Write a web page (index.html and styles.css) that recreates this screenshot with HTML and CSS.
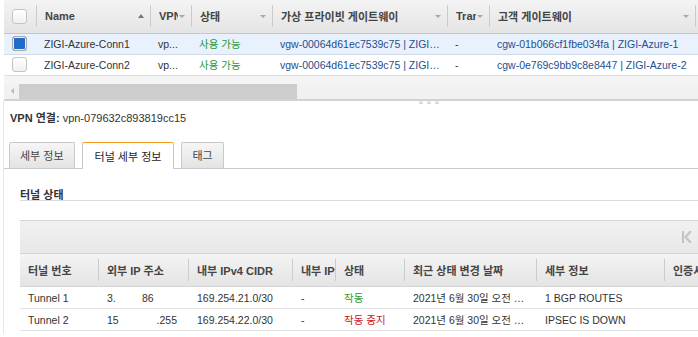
FILE: index.html
```html
<!DOCTYPE html>
<html lang="ko">
<head>
  <meta charset="UTF-8">
  <title>VPN 연결</title>
  <link rel="stylesheet" href="styles.css">
</head>
<body>

  <div class="list-panel">
    <table class="grid top-grid">
      <colgroup>
        <col style="width:32px"><col style="width:114px"><col style="width:41px"><col style="width:81px">
        <col style="width:175px"><col style="width:42px"><col style="width:206px"><col style="width:60px">
      </colgroup>
      <thead>
        <tr>
          <th class="cb-cell"><span class="checkbox"></span></th>
          <th class="sep"><div class="th-inner"><span class="label">Name</span><span class="arrow-up"></span></div></th>
          <th class="sep"><div class="th-inner tight"><span class="label">VPN</span><span class="arrow-down"></span></div></th>
          <th class="sep"><div class="th-inner"><span class="label">상태</span><span class="arrow-down"></span></div></th>
          <th class="sep"><div class="th-inner"><span class="label">가상 프라이빗 게이트웨이</span><span class="arrow-down"></span></div></th>
          <th class="sep"><div class="th-inner tight"><span class="label">Tran</span><span class="arrow-down"></span></div></th>
          <th class="sep"><div class="th-inner"><span class="label">고객 게이트웨이</span><span class="arrow-down"></span></div></th>
          <th class="sep"></th>
        </tr>
      </thead>
      <tbody>
        <tr class="selected">
          <td class="cb-cell"><span class="checkbox checked"></span></td>
          <td>ZIGI-Azure-Conn1</td>
          <td>vp...</td>
          <td class="ok">사용 가능</td>
          <td class="link">vgw-00064d61ec7539c75 | ZIGI-Azure-VGW</td>
          <td>-</td>
          <td class="link">cgw-01b066cf1fbe034fa | ZIGI-Azure-1</td>
          <td></td>
        </tr>
        <tr>
          <td class="cb-cell"><span class="checkbox"></span></td>
          <td>ZIGI-Azure-Conn2</td>
          <td>vp...</td>
          <td class="ok">사용 가능</td>
          <td class="link">vgw-00064d61ec7539c75 | ZIGI-Azure-VGW</td>
          <td>-</td>
          <td class="link">cgw-0e769c9bb9c8e8447 | ZIGI-Azure-2</td>
          <td></td>
        </tr>
      </tbody>
    </table>

    <div class="scroll-area">
      <div class="scroll-track">
        <span class="scroll-arrow"></span>
        <span class="scroll-thumb"></span>
      </div>
    </div>
  </div>

  <div class="splitter">
    <span class="grip"></span><span class="grip"></span><span class="grip"></span>
  </div>

  <div class="detail-panel">
    <div class="detail-title"><strong>VPN 연결:</strong> vpn-079632c893819cc15</div>

    <div class="tabs">
      <div class="tab">세부 정보</div>
      <div class="tab active">터널 세부 정보</div>
      <div class="tab">태그</div>
    </div>

    <div class="tab-body">
      <div class="section-title">터널 상태</div>

      <div class="tunnel-box">
        <div class="pager">
          <svg width="10" height="12" viewBox="0 0 10 12">
            <rect x="0" y="0" width="2" height="12" fill="#c4c4c4"/>
            <path d="M9 0 L3.5 6 L9 12" fill="none" stroke="#c4c4c4" stroke-width="2.2"/>
          </svg>
        </div>
        <table class="grid tunnel-grid">
          <colgroup>
            <col style="width:78px"><col style="width:90px"><col style="width:104px"><col style="width:43px">
            <col style="width:69px"><col style="width:132px"><col style="width:128px"><col style="width:96px">
          </colgroup>
          <thead>
            <tr>
              <th>터널 번호</th>
              <th class="sep">외부 IP 주소</th>
              <th class="sep">내부 IPv4 CIDR</th>
              <th class="sep clip">내부 IPv6 CIDR</th>
              <th class="sep">상태</th>
              <th class="sep">최근 상태 변경 날짜</th>
              <th class="sep">세부 정보</th>
              <th class="sep clip">인증서 ARN</th>
            </tr>
          </thead>
          <tbody>
            <tr>
              <td>Tunnel 1</td>
              <td class="pre">3.         86</td>
              <td>169.254.21.0/30</td>
              <td>-</td>
              <td class="ok">작동</td>
              <td>2021년 6월 30일 오전 10:25:11 UTC+9</td>
              <td>1 BGP ROUTES</td>
              <td></td>
            </tr>
            <tr>
              <td>Tunnel 2</td>
              <td class="pre">15             .255</td>
              <td>169.254.22.0/30</td>
              <td>-</td>
              <td class="down">작동 중지</td>
              <td>2021년 6월 30일 오전 10:24:37 UTC+9</td>
              <td>IPSEC IS DOWN</td>
              <td></td>
            </tr>
          </tbody>
        </table>
      </div>
    </div>
  </div>

</body>
</html>
```

FILE: styles.css
```css
html, body {
  margin: 0;
  padding: 0;
  overflow: hidden;
}

body {
  width: 698px;
  height: 337px;
  background: #fff;
  font-family: "Liberation Sans", Arial, "Noto Sans CJK KR", sans-serif;
  font-size: 11px;
  color: #333;
}

/* ---------- shared grid ---------- */

.grid {
  border-collapse: collapse;
  table-layout: fixed;
}

.grid th,
.grid td {
  padding: 0 6px 0 9px;
  white-space: nowrap;
  overflow: hidden;
  text-overflow: ellipsis;
  text-align: left;
}

.grid td {
  font-size: 10.5px;
}

.grid th {
  font-weight: bold;
  color: #444;
  background: linear-gradient(#f4f4f4, #e4e4e4);
}

.grid th.sep {
  background:
    linear-gradient(#cbcbcb, #cbcbcb) left center / 1px 22px no-repeat,
    linear-gradient(#f4f4f4, #e4e4e4);
}

.grid th.clip {
  text-overflow: clip;
  padding-right: 0;
}

.ok { color: #1f9a35; }
.down { color: #d0111b; }
.link { color: #1d4f91; }
.pre { white-space: pre !important; }

/* ---------- top list ---------- */

.list-panel {
  margin-left: 4px;
  width: 694px;
}

.top-grid {
  width: 751px;
}

.top-grid thead tr {
  height: 33px;
  border-bottom: 1px solid #c6c6c6;
}

.top-grid tbody tr {
  height: 21px;
  border-bottom: 1px solid #dedede;
}

.top-grid tbody tr.selected {
  background: #e9f1fc;
  border-bottom-color: #cfdbe9;
}

.top-grid td {
  padding-left: 8px;
}

.top-grid .cb-cell {
  padding: 0 0 0 8px;
}

.th-inner {
  display: flex;
  align-items: center;
  justify-content: space-between;
}

.th-inner.tight {
  justify-content: flex-start;
  gap: 1px;
}

.th-inner .label {
  overflow: hidden;
  white-space: nowrap;
}

.th-inner.tight .label {
  max-width: 22px;
}

.arrow-down {
  flex: none;
  width: 0;
  height: 0;
  border-left: 3px solid transparent;
  border-right: 3px solid transparent;
  border-top: 3px solid #a8a8a8;
  margin-top: 1px;
}

.arrow-up {
  flex: none;
  width: 0;
  height: 0;
  border-left: 3px solid transparent;
  border-right: 3px solid transparent;
  border-bottom: 4px solid #777;
}

.checkbox {
  display: block;
  width: 13px;
  height: 13px;
  border: 1px solid #c4c4c4;
  border-radius: 3px;
  background: linear-gradient(#ffffff, #f0f0f0);
}

.checkbox.checked {
  border-color: #a9a9a9;
  background: #1f6ccc;
  box-shadow: inset 0 0 0 1px #e6eefa;
}

.scroll-area {
  height: 25px;
  padding-top: 8px;
  box-sizing: border-box;
  background: #f4f4f4;
  border-bottom: 2px solid #d2d2d2;
  width: 694px;
}

.scroll-track {
  display: flex;
  align-items: center;
  height: 15px;
  background: #f1f1f1;
}

.scroll-arrow {
  width: 0;
  height: 0;
  margin: 0 5px 0 7px;
  border-top: 3px solid transparent;
  border-bottom: 3px solid transparent;
  border-right: 3px solid #b8b8b8;
}

.scroll-thumb {
  width: 278px;
  height: 15px;
  background: #cdcdcd;
}

.splitter {
  display: flex;
  gap: 4px;
  padding-left: 419px;
  height: 0;
}

.grip {
  width: 4px;
  height: 3px;
  border-radius: 2px 2px 0 0;
  background: #dcdcdc;
}

/* ---------- detail panel ---------- */

.detail-panel {
  margin-left: 3px;
  border-left: 1px solid #e6e6e6;
  height: 233px;
}

.detail-title {
  padding: 10px 0 0 6px;
  line-height: 15px;
  height: 22px;
  color: #333;
}

.tabs {
  display: flex;
  gap: 7px;
  margin-top: 9px;
  padding-left: 5px;
  height: 26px;
  border-bottom: 1px solid #cbcbcb;
}

.tab {
  display: flex;
  align-items: center;
  justify-content: center;
  box-sizing: border-box;
  height: 26px;
  padding: 0 10px;
  border: 1px solid #c9c9c9;
  border-bottom: none;
  border-radius: 2px 2px 0 0;
  background: linear-gradient(#f6f6f6, #e3e3e3);
  color: #444;
}

.tab.active {
  height: 27px;
  padding: 0 12px;
  background: #fff;
  border-top: 1px solid #f49a1c;
  color: #222;
}

.tab-body {
  padding-left: 16px;
}

.section-title {
  margin-top: 14px;
  height: 17px;
  line-height: 24px;
  border-bottom: 1px solid #dcdcdc;
  color: #333;
  font-weight: bold;
}

.tunnel-box {
  margin-top: 19px;
  border-top: 1px solid #d4d4d4;
  width: 760px;
}

.pager {
  display: flex;
  align-items: center;
  height: 32px;
  padding-left: 662px;
  background: linear-gradient(#f1f1f1, #e8e8e8);
  border-bottom: 1px solid #d4d4d4;
}

.tunnel-grid {
  width: 740px;
}

.tunnel-grid thead tr {
  height: 33px;
  border-bottom: 1px solid #d4d4d4;
}

.tunnel-grid th,
.tunnel-grid td {
  padding-left: 8px;
}

.tunnel-grid th.sep,
.tunnel-grid td + td {
  padding-left: 9px;
}

.tunnel-grid tbody tr {
  height: 22px;
  border-bottom: 1px solid #e1e1e1;
}
```
